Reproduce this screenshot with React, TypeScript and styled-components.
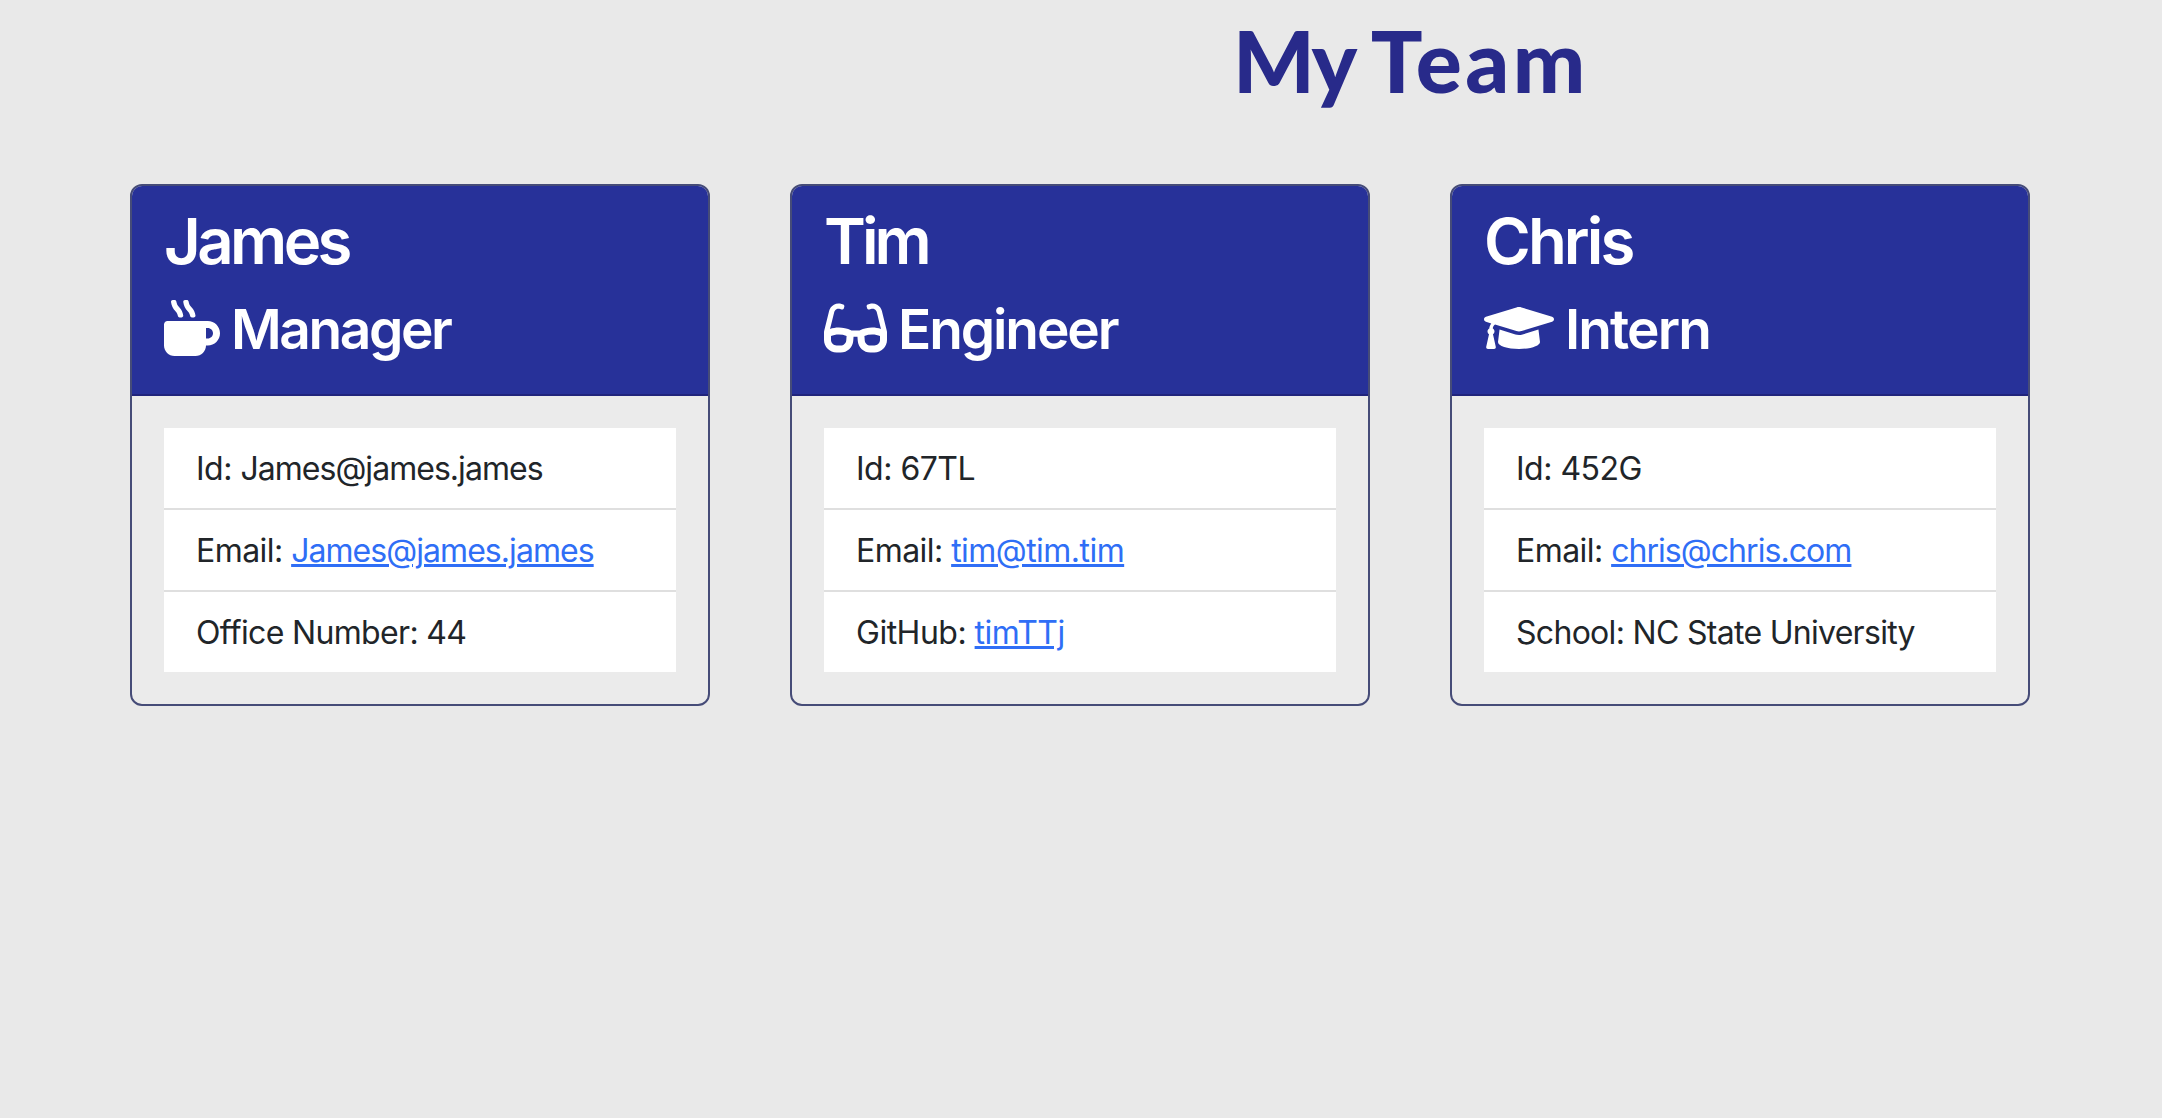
import React from "react";
import styled, { createGlobalStyle } from "styled-components";
import { FaGlasses, FaGraduationCap, FaMugHot } from "react-icons/fa";
import type { IconType } from "react-icons";

const GlobalStyle = createGlobalStyle`
  *, *::before, *::after { box-sizing: border-box; }
  body {
    margin: 0;
    min-height: 100vh;
    background: #e9e9e9;
    color: #212529;
    font-family: Inter, "Liberation Sans", sans-serif;
    font-size: 32px;
    line-height: 48px;
  }
`;

const Title = styled.h1`
  margin: 0;
  height: 184px;
  padding: 7px 0 0 1233px;
  color: #282a8a;
  font-family: Lato, sans-serif;
  font-size: 86px;
  font-weight: 900;
  line-height: 106px;
  white-space: pre;
`;

const Tracked = styled.span<{ $tracking: number }>`
  letter-spacing: ${(p) => p.$tracking}px;
`;

const Team = styled.main`
  display: flex;
  align-items: flex-start;
  gap: 80px;
  padding-left: 130px;
`;

const Card = styled.article`
  width: 580px;
  border: 2px solid #464c78;
  border-radius: 12px;
  overflow: hidden;
  background: #ebebeb;
`;

const CardHeader = styled.header`
  height: 210px;
  padding: 16px 32px;
  border-bottom: 2px solid #20247c;
  background: #273199;
  color: #fff;
`;

const Name = styled.h2<{ $tracking: number }>`
  margin: 0 0 17px;
  font-size: 63.5px;
  font-weight: 600;
  line-height: 77px;
  letter-spacing: ${(p) => p.$tracking}px;
`;

const Role = styled.h3<{ $tracking: number; $iconWidth: number }>`
  display: flex;
  align-items: center;
  margin: 0;
  font-size: 55px;
  font-weight: 600;
  line-height: 67px;
  letter-spacing: ${(p) => p.$tracking}px;

  svg {
    flex: none;
    height: 56px;
    width: ${(p) => p.$iconWidth}px;
    margin: -3px 11px 0 0;
  }
`;

const Details = styled.ul`
  margin: 32px;
  padding: 0;
  list-style: none;
  background: #fff;
`;

const Detail = styled.li<{ $tracking: number }>`
  height: 82px;
  padding: 17px 32px 0;
  border-bottom: 2px solid #dfdfdf;
  letter-spacing: ${(p) => p.$tracking}px;
  white-space: nowrap;

  &:last-child {
    height: 80px;
    border-bottom: 0;
  }
`;

const Link = styled.a`
  color: #2f6ef6;
  text-decoration: underline;
  text-decoration-thickness: 3px;
  text-underline-offset: 2px;
`;

type Field = {
  label: string;
  value: string;
  href?: string;
  labelTracking: number;
  valueTracking: number;
};
type Member = {
  name: string;
  nameTracking: number;
  role: string;
  roleTracking: number;
  icon: IconType;
  iconWidth: number;
  fields: Field[];
};

const members: Member[] = [
  {
    name: "James",
    nameTracking: -3.6,
    role: "Manager",
    roleTracking: -2.4,
    icon: FaMugHot,
    iconWidth: 56,
    fields: [
      { label: "Id", value: "James@james.james", labelTracking: -0.5, valueTracking: -0.96 },
      { label: "Email", value: "James@james.james", href: "mailto:James@james.james", labelTracking: -0.55, valueTracking: -0.94 },
      { label: "Office Number", value: "44", labelTracking: -0.66, valueTracking: -0.66 },
    ],
  },
  {
    name: "Tim",
    nameTracking: -4,
    role: "Engineer",
    roleTracking: -2.1,
    icon: FaGlasses,
    iconWidth: 63,
    fields: [
      { label: "Id", value: "67TL", labelTracking: -0.5, valueTracking: -0.5 },
      { label: "Email", value: "tim@tim.tim", href: "mailto:tim@tim.tim", labelTracking: -0.55, valueTracking: -0.53 },
      { label: "GitHub", value: "timTTj", href: "https://github.com/timTTj", labelTracking: -0.5, valueTracking: -0.5 },
    ],
  },
  {
    name: "Chris",
    nameTracking: -2.9,
    role: "Intern",
    roleTracking: -1.9,
    icon: FaGraduationCap,
    iconWidth: 70,
    fields: [
      { label: "Id", value: "452G", labelTracking: -0.5, valueTracking: -0.5 },
      { label: "Email", value: "chris@chris.com", href: "mailto:chris@chris.com", labelTracking: -0.55, valueTracking: -0.94 },
      { label: "School", value: "NC State University", labelTracking: -0.7, valueTracking: -0.7 },
    ],
  },
];

export default function App() {
  return (
    <>
      <GlobalStyle />
      <Title>
        <Tracked $tracking={-2.4}>{"My "}</Tracked>
        <Tracked $tracking={3.4}>Team</Tracked>
      </Title>
      <Team>
        {members.map(({ icon: Icon, ...m }) => (
          <Card key={m.name}>
            <CardHeader>
              <Name $tracking={m.nameTracking}>{m.name}</Name>
              <Role $tracking={m.roleTracking} $iconWidth={m.iconWidth}>
                <Icon />
                {m.role}
              </Role>
            </CardHeader>
            <Details>
              {m.fields.map((f) => (
                <Detail key={f.label} $tracking={f.labelTracking}>
                  {f.label}:{" "}
                  <Tracked $tracking={f.valueTracking}>
                    {f.href ? <Link href={f.href}>{f.value}</Link> : f.value}
                  </Tracked>
                </Detail>
              ))}
            </Details>
          </Card>
        ))}
      </Team>
    </>
  );
}
